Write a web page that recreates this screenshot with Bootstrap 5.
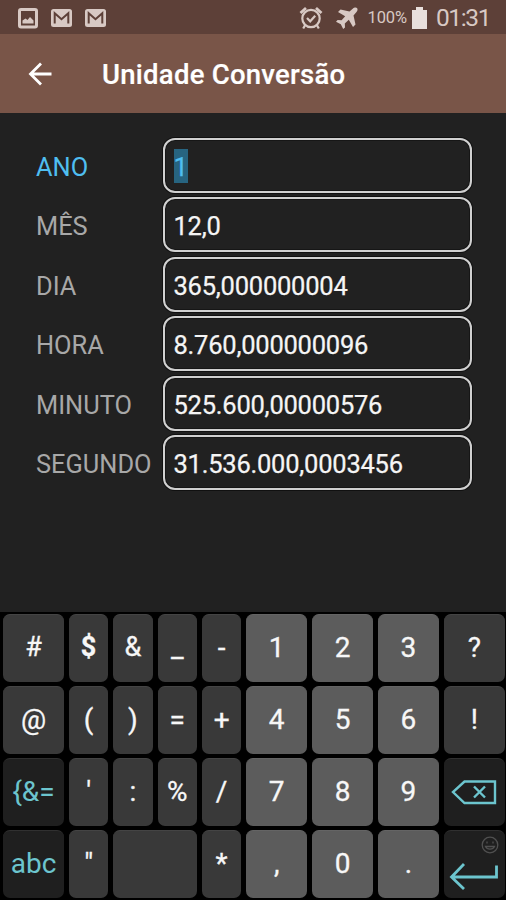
<!DOCTYPE html>
<html lang="pt-BR" data-bs-theme="dark">
<head>
<meta charset="utf-8">
<meta name="viewport" content="width=device-width, initial-scale=1">
<title>Unidade Conversão</title>
<link href="https://cdn.jsdelivr.net/npm/bootstrap@5.3.0/dist/css/bootstrap.min.css" rel="stylesheet">
<style>
body { font-family: Roboto, "Noto Sans", sans-serif; background: #212121; height: 900px; overflow: hidden; line-height: 1; }
svg { display: block; flex: none; }
.status { height: 34px; background: #5d4038; color: #d8c9c4; padding: 2px 16px 0 18px; }
.mail { margin-left: 13px; }
.mail + .mail { margin-left: 12px; }
.plane { margin-left: 12px; }
.battery { margin-left: 5px; }
.status .pct { font-size: 16.5px; margin-left: 8px; letter-spacing: -.1px; padding-top: 1px; }
.status .clock { font-size: 24.5px; margin-left: 9px; letter-spacing: -1.4px; padding-top: 1px; }
.appbar { height: 79px; background: #795548; padding-left: 28px; }
.appbar h1 { font-size: 27.5px; font-weight: 500; margin-left: 50px; padding-top: 2px; letter-spacing: .25px; -webkit-text-stroke: .2px #fff; }
.units { padding: 24.5px 34px 0 36px; gap: 4.5px; }
.unit-row { height: 55px; }
.unit-row label { width: 127px; font-size: 25.4px; color: #a8a8a8; padding-top: 5px; }
.unit-row .value { height: 55px; border: 2px solid #d0d0d0; border-radius: 12px; box-shadow: 0 0 0 1px #101010, inset 0 0 0 1px #161616; padding: 5px 8.5px 0; font-size: 25.5px; letter-spacing: -.23px; color: #f5f5f5; -webkit-text-stroke: .25px; }
.unit-row.current label, .unit-row.current .value { color: #4fbef0; }
.picked { background: #276480; height: 34px; padding-top: 6px; margin-top: -3px; }
.keys { display: grid; background: #000; height: 288px; padding: 2px 1.2px 2px 3px; gap: 4.6px 4.8px;
  grid-template-columns: 61fr repeat(4, 39.5fr) repeat(4, 61fr); grid-template-rows: repeat(4, 1fr); }
.key { background: #393939; border: 0; border-top: 1px solid #444; border-radius: 7px; color: #f7f7f7; font-size: 28px; padding: 0 0 1px; min-width: 0; display: flex; align-items: center; justify-content: center; line-height: 1; -webkit-text-stroke: .3px; }
.key.num { background: #5c5c5c; border-top-color: #646464; }
.key.fn { background: #1f1f1f; border-top-color: #303030; color: #6cc5ce; -webkit-text-stroke: 0; }
.key.sm-glyph { font-size: 27px; }
.key.space { grid-column: span 2; }
.face { top: 5px; right: 6px; }
</style>
<script src="https://cdn.jsdelivr.net/npm/bootstrap@5.3.0/dist/js/bootstrap.bundle.min.js"></script>
</head>
<body class="d-flex flex-column m-0">
<div class="status d-flex align-items-center flex-shrink-0">
  <svg width="20" height="22" viewBox="0 0 20 22"><rect x="1.5" y="2.5" width="17" height="17.5" rx="1.5" fill="none" stroke="#d8c9c4" stroke-width="3"/><path d="M4.500 16.500v-3l3-2 2 1.500 2.500-3 3.500 3.500v3z" fill="#d8c9c4"/></svg>
  <svg class="mail" width="22" height="20" viewBox="0 0 22 20"><rect y="1" width="21" height="18" rx="2.5" fill="#d8c9c4"/><path d="M3.700 15.500V5.200l6.800 6 6.800-6v10.300" fill="none" stroke="#5d4038" stroke-width="2"/></svg>
  <svg class="mail" width="22" height="20" viewBox="0 0 22 20"><rect y="1" width="21" height="18" rx="2.5" fill="#d8c9c4"/><path d="M3.700 15.500V5.200l6.800 6 6.800-6v10.300" fill="none" stroke="#5d4038" stroke-width="2"/></svg>
  <svg class="ms-auto" width="24" height="24" viewBox="0 0 24 24" fill="none" stroke="#d8c9c4" stroke-width="2.200"><circle cx="12" cy="12.500" r="8.700"/><path d="M8 12l3.200 3.300 5-5.500M6.200 19l-2 3.500M17.800 19l2 3.500"/><path d="M1.500 7 7 2M22.500 7 17 2" stroke-width="2.800"/></svg>
  <svg class="plane" width="24" height="24" viewBox="0 0 24 24" fill="#d8c9c4"><path d="M22 2c-1-1-3-.5-4 .5l-3.500 3L5.500 3.500 3 6l7.200 4.200-3.600 4-4-.2L1 15.800l4.800 2.400L8.200 23l1.800-1.600-.2-4 4-3.600L18 21l2.500-2.500-2-9 3-3.500c1-1 1.500-3 .5-4z"/></svg>
  <span class="pct">100%</span>
  <svg class="battery" width="15" height="24" viewBox="0 0 15 24"><path d="M4 1h7v3h4v19H0V4h4z" fill="#e8dfdc"/></svg>
  <span class="clock">01:31</span>
</div>
<header class="appbar d-flex align-items-center flex-shrink-0 text-white">
  <svg width="24" height="24" viewBox="0 0 24 24" fill="none" stroke="#fff" stroke-width="2.800"><path d="M23.500 12H3M13 1.500 2.500 12 13 22.500"/></svg>
  <h1 class="mb-0">Unidade Conversão</h1>
</header>
<main class="units d-flex flex-column flex-grow-1">
  <div class="unit-row current d-flex align-items-center"><label>ANO</label><div class="value flex-grow-1 d-flex align-items-center"><span class="picked">1</span></div></div>
  <div class="unit-row d-flex align-items-center"><label>MÊS</label><div class="value flex-grow-1 d-flex align-items-center">12,0</div></div>
  <div class="unit-row d-flex align-items-center"><label>DIA</label><div class="value flex-grow-1 d-flex align-items-center">365,000000004</div></div>
  <div class="unit-row d-flex align-items-center"><label>HORA</label><div class="value flex-grow-1 d-flex align-items-center">8.760,000000096</div></div>
  <div class="unit-row d-flex align-items-center"><label>MINUTO</label><div class="value flex-grow-1 d-flex align-items-center">525.600,00000576</div></div>
  <div class="unit-row d-flex align-items-center"><label>SEGUNDO</label><div class="value flex-grow-1 d-flex align-items-center">31.536.000,0003456</div></div>
</main>
<section class="keys flex-shrink-0">
  <button class="key sm-glyph">#</button><button class="key sm-glyph fw-bold">$</button><button class="key sm-glyph">&amp;</button><button class="key">_</button><button class="key">-</button><button class="key num">1</button><button class="key num">2</button><button class="key num">3</button><button class="key">?</button>
  <button class="key">@</button><button class="key">(</button><button class="key">)</button><button class="key">=</button><button class="key">+</button><button class="key num">4</button><button class="key num">5</button><button class="key num">6</button><button class="key">!</button>
  <button class="key fn">{&amp;=</button><button class="key">'</button><button class="key">:</button><button class="key">%</button><button class="key">/</button><button class="key num">7</button><button class="key num">8</button><button class="key num">9</button>
  <button class="key fn" aria-label="Apagar"><svg width="46" height="26" viewBox="0 0 46 26" fill="none" stroke="#6cc5ce" stroke-width="2.400"><path d="M13.500 2.500H44v21.500H13.500L2 13zM23 7.500l11 11M34 7.500l-11 11"/></svg></button>
  <button class="key fn">abc</button><button class="key">"</button><button class="key space" aria-label="Espaço"></button><button class="key">*</button><button class="key num">,</button><button class="key num">0</button><button class="key num">.</button>
  <button class="key fn position-relative align-items-end pb-1" aria-label="Enter">
    <svg class="face position-absolute" width="18" height="18" viewBox="0 0 18 18" fill="none" stroke="#505050" stroke-width="1.300"><circle cx="9" cy="9" r="7.800"/><path d="M4.500 10.500c1.500 3.500 7.500 3.500 9 0zM6 5.500v2M12 5.500v2"/></svg>
    <svg class="mb-1" width="50" height="28" viewBox="0 0 50 28" fill="none" stroke="#6cc5ce" stroke-width="2.800"><path d="M47.500 3.500V15H3M15 2 2.500 15 15 27"/></svg>
  </button>
</section>
</body>
</html>
